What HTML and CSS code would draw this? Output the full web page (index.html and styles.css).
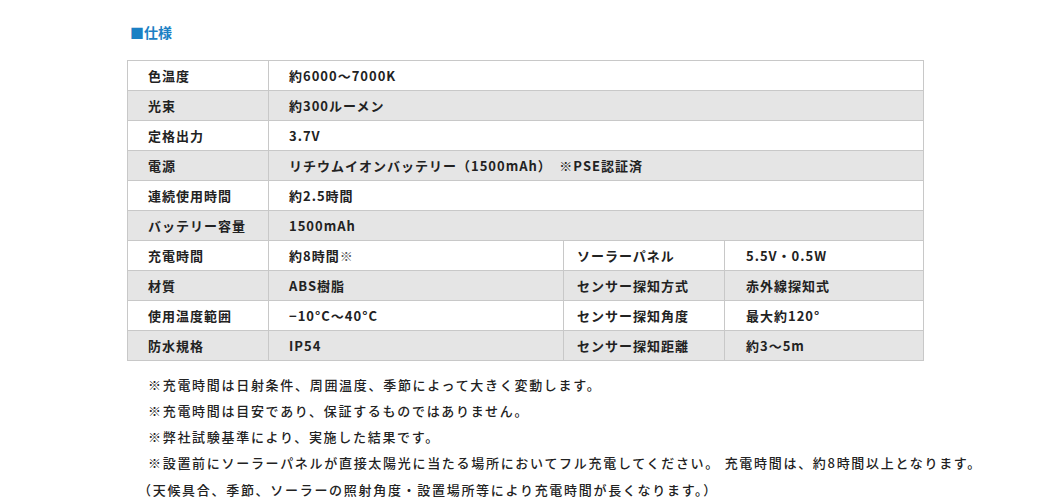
FILE: index.html
```html
<!DOCTYPE html>
<html lang="ja">
<head>
<meta charset="utf-8">
<link rel="stylesheet" href="styles.css">
</head>
<body>
<div class="spec">
  <h2 class="spec-title">■仕様</h2>
  <table class="spec-table">
    <colgroup>
      <col class="c1"><col class="c2"><col class="c3"><col class="c4">
    </colgroup>
    <tr><th>色温度</th><td colspan="3">約6000〜7000K</td></tr>
    <tr class="alt"><th>光束</th><td colspan="3">約300ルーメン</td></tr>
    <tr><th>定格出力</th><td colspan="3">3.7V</td></tr>
    <tr class="alt"><th>電源</th><td colspan="3">リチウムイオンバッテリー（1500mAh）　※PSE認証済</td></tr>
    <tr><th>連続使用時間</th><td colspan="3">約2.5時間</td></tr>
    <tr class="alt"><th>バッテリー容量</th><td colspan="3">1500mAh</td></tr>
    <tr><th>充電時間</th><td>約8時間<span class="kome">※</span></td><th>ソーラーパネル</th><td>5.5V・0.5W</td></tr>
    <tr class="alt"><th>材質</th><td>ABS樹脂</td><th>センサー探知方式</th><td>赤外線探知式</td></tr>
    <tr><th>使用温度範囲</th><td>−10°C〜40°C</td><th>センサー探知角度</th><td>最大約120°</td></tr>
    <tr class="alt"><th>防水規格</th><td>IP54</td><th>センサー探知距離</th><td>約3〜5m</td></tr>
  </table>
  <ul class="notes">
    <li>※充電時間は日射条件、周囲温度、季節によって大きく変動します。</li>
    <li>※充電時間は目安であり、保証するものではありません。</li>
    <li>※弊社試験基準により、実施した結果です。</li>
    <li>※設置前にソーラーパネルが直接太陽光に当たる場所においてフル充電してください。 充電時間は、約8時間以上となります。</li>
    <li class="paren">（天候具合、季節、ソーラーの照射角度・設置場所等により充電時間が長くなります。）</li>
  </ul>
</div>
</body>
</html>
```

FILE: styles.css
```css
html, body {
  margin: 0;
  padding: 0;
  background: #fff;
}
body {
  font-family: "Noto Sans CJK JP", "Noto Sans", sans-serif;
  color: #222;
}
.spec {
  padding: 23px 0 0 127px;
  width: 796px;
}
.spec-title {
  margin: 0 0 19px 3px;
  font-size: 14px;
  line-height: 18px;
  font-weight: 700;
  color: #1b80c4;
}
.spec-table {
  border-collapse: collapse;
  width: 796px;
  table-layout: fixed;
  font-size: 13px;
  font-weight: 700;
  letter-spacing: 1px;
}
.c1 { width: 141px; }
.c2 { width: 295px; }
.c3 { width: 161px; }
.c4 { width: 199px; }
.spec-table th,
.spec-table td {
  border: 1px solid #c8c8c8;
  height: 29px;
  padding: 0 0 0 20px;
  text-align: left;
  font-weight: 700;
  white-space: nowrap;
}
.spec-table tr.alt th,
.spec-table tr.alt td {
  background: #e5e5e5;
}
.spec-table th + td + th { padding-left: 13px; }
.spec-table td + th + td { padding-left: 21px; }
.kome { font-weight: 400; color: #555; }
.notes {
  list-style: none;
  margin: 11px 0 0 0;
  padding: 0 0 0 21px;
  font-size: 13px;
  line-height: 26px;
  letter-spacing: 1.7px;
  font-weight: 500;
  white-space: nowrap;
}
.notes .paren { margin: 2px 0 0 -10px; line-height: 24px; }
```
